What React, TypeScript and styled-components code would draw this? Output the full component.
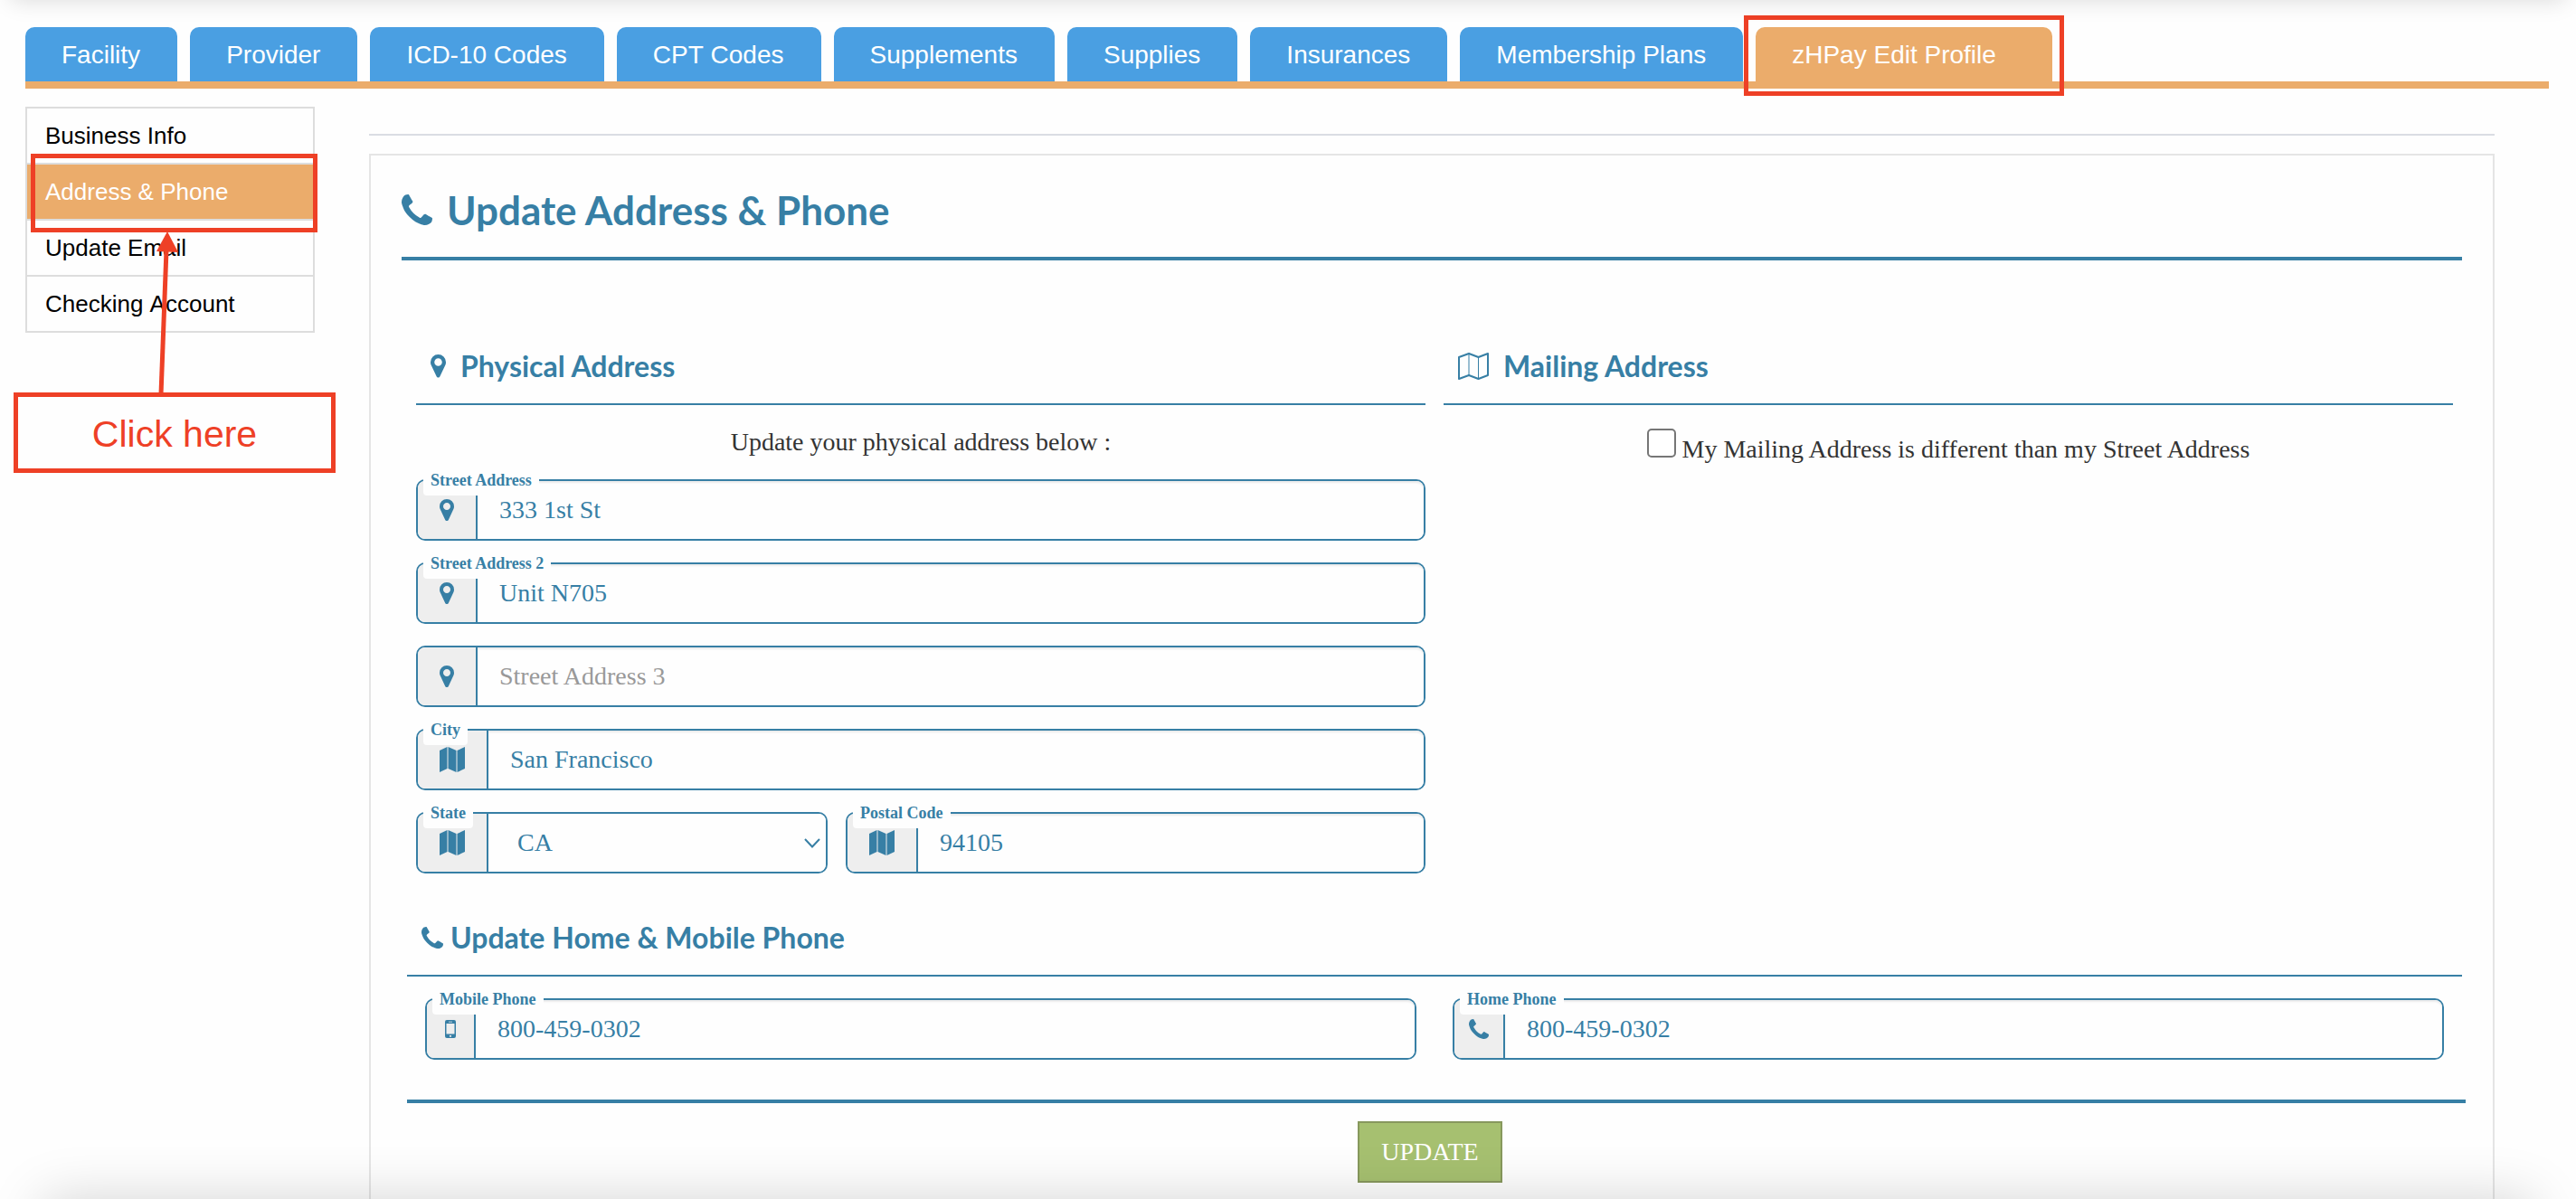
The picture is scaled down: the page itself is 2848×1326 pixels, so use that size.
import React from "react";
import styled, { createGlobalStyle } from "styled-components";

const blue = "#377fa5";
const orange = "#ebac6b";
const red = "#ee4026";
const paper = "#fefefe";
const sans = `"Liberation Sans", Arial, sans-serif`;
const serif = `"Liberation Serif", "Times New Roman", serif`;
const display = `Lato, "Open Sans", sans-serif`;

const GlobalStyle = createGlobalStyle`
  *, *::before, *::after { box-sizing: border-box; }
  body {
    margin: 0;
    background: ${paper};
    color: #333;
    font-family: ${serif};
    font-size: 28px;
    line-height: 32px;
  }
`;

const Page = styled.div`
  display: flex;
  flex-direction: column;
  min-height: 100vh;
  padding: 30px 30px 0 28px;
`;

const EdgeShade = styled.div<{ $edge: "top" | "bottom" }>`
  position: fixed;
  height: 80px;
  pointer-events: none;
  ${({ $edge }) =>
    $edge === "top"
      ? `bottom: 100%; left: 12px; right: 12px; box-shadow: 0 0 24px rgba(0, 0, 0, 0.15);`
      : `top: 100%; left: 48px; right: 48px; box-shadow: 0 0 60px rgba(0, 0, 0, 0.17);`}
`;

const Tabs = styled.nav`
  display: flex;
  gap: 14px;
  border-bottom: 8px solid ${orange};
`;

const Tab = styled.a<{ $active?: boolean }>`
  position: relative;
  height: 60px;
  padding: 0 ${({ $active }) => ($active ? 62 : 41)}px 0 40px;
  border-radius: 10px 10px 0 0;
  background: ${({ $active }) => ($active ? orange : "#4a9fe2")};
  color: #fff;
  font: 28px/62px ${sans};
  font-kerning: none;
  text-decoration: none;
  white-space: nowrap;
`;

const TabMark = styled.span`
  position: absolute;
  inset: -13px -13px -16px;
  border: 5px solid ${red};
`;

const Body = styled.div`
  display: flex;
  flex: 1;
  align-items: stretch;
`;

const Side = styled.aside`
  position: relative;
  flex: none;
  width: 320px;
  padding-top: 20px;
`;

const SideNav = styled.nav`
  border: 2px solid #ddd;
`;

const SideLink = styled.a<{ $active?: boolean }>`
  display: block;
  height: 60px;
  padding-left: 20px;
  background: ${({ $active }) => ($active ? orange : paper)};
  color: ${({ $active }) => ($active ? "#fff" : "#000")};
  font: 26px/60px ${sans};
  font-kerning: none;
  text-decoration: none;
  & + & {
    height: 62px;
    border-top: 2px solid #ddd;
  }
`;

const SideMark = styled.span`
  position: absolute;
  top: 72px;
  left: 6px;
  right: -3px;
  height: 87px;
  border: 5px solid ${red};
`;

const Arrow = styled.svg`
  position: absolute;
  top: 158px;
  left: 140px;
`;

const Callout = styled.div`
  position: absolute;
  top: 336px;
  left: -13px;
  right: -23px;
  height: 89px;
  border: 5px solid ${red};
  color: ${red};
  font: 41px/82px ${sans};
  text-align: center;
`;

const Main = styled.main`
  display: flex;
  flex: 1;
  flex-direction: column;
  min-width: 0;
  padding: 50px 60px 0;
`;

const Divider = styled.hr`
  width: 100%;
  height: 2px;
  margin: 0 0 20px;
  border: 0;
  background: #dadde3;
`;

const Card = styled.section`
  flex: 1;
  padding: 36px 34px 0;
  border: 2px solid #e5e5e5;
  border-bottom: 0;
`;

const Title = styled.h1`
  display: flex;
  align-items: center;
  gap: 16px;
  margin: 0;
  padding-bottom: 28px;
  border-bottom: 4px solid ${blue};
  color: ${blue};
  font: 700 44px/48px ${display};
`;

const SectionTitle = styled.h2<{ $gap?: number }>`
  display: flex;
  align-items: center;
  gap: ${({ $gap = 16 }) => $gap}px;
  margin: 0;
  padding: 0 16px 23px;
  border-bottom: 2px solid ${blue};
  color: ${blue};
  font: 700 32px/36px ${display};
`;

const Columns = styled.div`
  display: grid;
  grid-template-columns: 1fr 1fr;
  gap: 20px;
  margin: 99px 10px 0 16px;
`;

const Prompt = styled.p`
  margin: 25px 0;
  text-align: center;
`;

const Fields = styled.div`
  display: grid;
  gap: 24px;
`;

const StateRow = styled.div`
  display: grid;
  grid-template-columns: 71fr 100fr;
  gap: 20px;
`;

const Frame = styled.div`
  position: relative;
  display: flex;
  height: 68px;
  border: 2px solid ${blue};
  border-radius: 10px;
`;

const Addon = styled.span<{ $width: number }>`
  display: flex;
  flex: none;
  align-items: center;
  justify-content: center;
  width: ${({ $width }) => $width + 2}px;
  border-right: 2px solid ${blue};
  border-radius: 8px 0 0 8px;
  background: #eee;
  color: ${blue};
`;

const Label = styled.label`
  position: absolute;
  top: -11px;
  left: 6px;
  padding: 0 8px 7px;
  border-radius: 4px;
  background: ${paper};
  color: ${blue};
  font: 700 18px/20px ${serif};
`;

const Input = styled.input`
  flex: 1;
  min-width: 0;
  padding: 0 24px;
  border: 0;
  border-radius: 0 8px 8px 0;
  outline: 0;
  background: ${paper};
  box-shadow: inset 0 2px 2px rgba(0, 0, 0, 0.075);
  color: ${blue};
  font: 28px/32px ${serif};
  &::placeholder {
    color: #999;
    opacity: 1;
  }
`;

const Select = styled.select`
  flex: 1;
  min-width: 0;
  padding: 0 32px;
  border: 0;
  border-radius: 0 8px 8px 0;
  outline: 0;
  appearance: none;
  background: ${paper};
  color: ${blue};
  font: 28px/32px ${serif};
`;

const Chevron = styled.svg`
  position: absolute;
  top: 27px;
  right: 6px;
  pointer-events: none;
`;

const CheckRow = styled.label`
  display: flex;
  align-items: baseline;
  justify-content: center;
  gap: 7px;
  margin-top: 26px;
`;

const Checkbox = styled.input`
  flex: none;
  width: 32px;
  height: 32px;
  margin: 0;
  appearance: none;
  border: 2px solid #767676;
  border-radius: 5px;
  background: #fff;
  &:checked {
    background: ${blue};
  }
`;

const PhoneSection = styled.section`
  margin: 53px 0 0 6px;
`;

const PhoneRow = styled.div`
  display: grid;
  grid-template-columns: 1fr 1fr;
  gap: 40px;
  padding: 24px 20px 44px;
`;

const Footer = styled.div`
  display: flex;
  justify-content: center;
  margin: 0 -4px 0 6px;
  padding-top: 20px;
  border-top: 4px solid ${blue};
`;

const UpdateButton = styled.button`
  width: 160px;
  height: 68px;
  margin-right: 14px;
  border: 2px solid #87985d;
  background: #a6c070;
  color: #fff;
  font: 28px/32px ${serif};
`;

type IconName = "marker" | "map" | "mapOutline" | "phone" | "mobile";

const phonePath =
  "M1600 1240q0 27-10 70.5t-21 68.5q-21 50-122 106-94 51-186 51-27 0-53-3.5t-57.5-12.5-47-14.5-55.5-20.5-49-18q-98-35-175-83-127-79-264-216t-216-264q-48-77-83-175-3-9-18-49t-20.5-55.5-14.5-47-12.5-57.5-3.5-53q0-92 51-186 56-101 106-122 25-11 68.5-21t70.5-10q14 0 21 3 18 6 53 76 11 19 30 54t35 63.5 31 53.5q3 4 17.5 25t21.5 35.5 7 28.5q0 20-28.5 50t-62 55-62 53-28.5 46q0 9 5 22.5t8.5 20.5 14 24 11.5 19q76 137 174 235t235 174q2 1 19 11.5t24 14 20.5 8.5 22.5 5q18 0 46-28.5t53-62 55-62 50-28.5q14 0 28.5 7t35.5 21.5 25 17.5q25 15 53.5 31t63.5 35 54 30q70 35 76 53 3 7 3 21z";
const markerPath =
  "M1152 640q0-106-75-181t-181-75-181 75-75 181 75 181 181 75 181-75 75-181zm256 0q0 109-33 179l-364 774q-16 33-47.5 52t-67.5 19-67.5-19-46.5-52l-365-774q-33-70-33-179 0-212 150-362t362-150 362 150 150 362z";

function Icon({ name, width }: { name: IconName; width: number }) {
  if (name === "phone")
    return (
      <svg width={width} viewBox="192 128 1408 1408" fill="currentColor" aria-hidden="true">
        <path d={phonePath} />
      </svg>
    );
  if (name === "marker")
    return (
      <svg width={width} viewBox="384 128 1024 1536" fill="currentColor" aria-hidden="true">
        <path d={markerPath} />
      </svg>
    );
  if (name === "map")
    return (
      <svg width={width} viewBox="0 0 28 28" fill="currentColor" aria-hidden="true">
        <path d="M0 4 8.500 0V24L0 28ZM9.500 0 18.500 4V28L9.500 24ZM19.500 4 28 0V24L19.500 28Z" />
      </svg>
    );
  if (name === "mapOutline")
    return (
      <svg width={width} viewBox="0 0 34 30" fill="none" stroke="currentColor" strokeLinejoin="round" aria-hidden="true">
        <path strokeWidth="2" d="M1 5 12 1 22.500 5 33 1V25L22.500 29 12 25 1 29Z" />
        <path strokeWidth="1" d="M12 1V25M22.500 5V29" />
      </svg>
    );
  return (
    <svg width={width} viewBox="0 0 12 20" fill="currentColor" fillRule="evenodd" aria-hidden="true">
      <path d="M2 0h8a2 2 0 0 1 2 2v16a2 2 0 0 1-2 2H2a2 2 0 0 1-2-2V2a2 2 0 0 1 2-2ZM1.500 4v11.500h9V4ZM4 1.700v.7h4v-.7ZM6 16.700a1.100 1.100 0 1 0 .01 0Z" />
    </svg>
  );
}

interface FieldProps {
  id: string;
  label: string;
  icon: IconName;
  iconWidth: number;
  addon: number;
  value?: string;
  options?: string[];
}

function Field({ id, label, icon, iconWidth, addon, value, options }: FieldProps) {
  return (
    <Frame>
      <Addon $width={addon}>
        <Icon name={icon} width={iconWidth} />
      </Addon>
      {options ? (
        <>
          <Select id={id} defaultValue={value}>
            {options.map((o) => (
              <option key={o}>{o}</option>
            ))}
          </Select>
          <Chevron width="18" height="11" viewBox="0 0 18 11" fill="none" stroke={blue} strokeWidth="2" aria-hidden="true">
            <path d="M1 1 9 9.500 17 1" />
          </Chevron>
        </>
      ) : (
        <Input
          id={id}
          type="text"
          defaultValue={value}
          placeholder={value ? undefined : label}
          aria-label={value ? undefined : label}
        />
      )}
      {value && <Label htmlFor={id}>{label}</Label>}
    </Frame>
  );
}

const tabs = [
  "Facility",
  "Provider",
  "ICD-10 Codes",
  "CPT Codes",
  "Supplements",
  "Supplies",
  "Insurances",
  "Membership Plans",
];

export default function App() {
  return (
    <Page>
      <GlobalStyle />
      <Tabs>
        {tabs.map((t) => (
          <Tab key={t} href="#">
            {t}
          </Tab>
        ))}
        <Tab href="#" $active>
          zHPay Edit Profile
          <TabMark />
        </Tab>
      </Tabs>
      <Body>
        <Side>
          <SideNav>
            <SideLink href="#">Business Info</SideLink>
            <SideLink href="#" $active>
              Address &amp; Phone
            </SideLink>
            <SideLink href="#">Update Email</SideLink>
            <SideLink href="#">Checking Account</SideLink>
          </SideNav>
          <SideMark />
          <Arrow width="36" height="180" viewBox="0 0 36 180" aria-hidden="true">
            <path d="M10 180 16 20" stroke={red} strokeWidth="5" />
            <path d="M17 0 29 23 5 22Z" fill={red} />
          </Arrow>
          <Callout>Click here</Callout>
        </Side>
        <Main>
          <Divider />
          <Card>
            <Title>
              <Icon name="phone" width={34} />
              Update Address &amp; Phone
            </Title>
            <Columns>
              <section>
                <SectionTitle>
                  <Icon name="marker" width={17} />
                  Physical Address
                </SectionTitle>
                <Prompt>Update your physical address below :</Prompt>
                <Fields>
                  <Field id="street1" label="Street Address" icon="marker" iconWidth={16} addon={64} value="333 1st St" />
                  <Field id="street2" label="Street Address 2" icon="marker" iconWidth={16} addon={64} value="Unit N705" />
                  <Field id="street3" label="Street Address 3" icon="marker" iconWidth={16} addon={64} />
                  <Field id="city" label="City" icon="map" iconWidth={28} addon={76} value="San Francisco" />
                  <StateRow>
                    <Field id="state" label="State" icon="map" iconWidth={28} addon={76} value="CA" options={["CA", "NY", "TX"]} />
                    <Field id="postal" label="Postal Code" icon="map" iconWidth={28} addon={76} value="94105" />
                  </StateRow>
                </Fields>
              </section>
              <section>
                <SectionTitle>
                  <Icon name="mapOutline" width={34} />
                  Mailing Address
                </SectionTitle>
                <CheckRow>
                  <Checkbox type="checkbox" />
                  <span>My Mailing Address is different than my Street Address</span>
                </CheckRow>
              </section>
            </Columns>
            <PhoneSection>
              <SectionTitle $gap={8}>
                <Icon name="phone" width={24} />
                Update Home &amp; Mobile Phone
              </SectionTitle>
              <PhoneRow>
                <Field id="mobile" label="Mobile Phone" icon="mobile" iconWidth={12} addon={52} value="800-459-0302" />
                <Field id="home" label="Home Phone" icon="phone" iconWidth={22} addon={54} value="800-459-0302" />
              </PhoneRow>
            </PhoneSection>
            <Footer>
              <UpdateButton type="button">UPDATE</UpdateButton>
            </Footer>
          </Card>
        </Main>
      </Body>
      <EdgeShade $edge="top" />
      <EdgeShade $edge="bottom" />
    </Page>
  );
}
